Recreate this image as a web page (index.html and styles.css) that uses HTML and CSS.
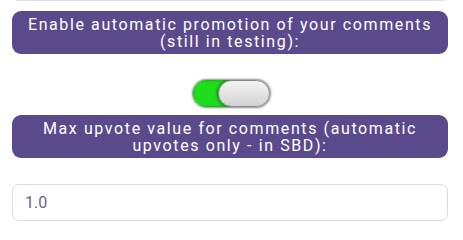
FILE: index.html
```html
<!DOCTYPE html>
<html>
<head>
<meta charset="utf-8">
<link rel="stylesheet" href="styles.css">
</head>
<body>
<div class="page">
  <div class="prev-line"></div>
  <div class="label label-first">Enable automatic promotion of your comments (still in testing):</div>
  <div class="toggle-row">
    <div class="toggle">
      <div class="toggle-on"></div>
      <div class="knob"></div>
    </div>
  </div>
  <div class="label">Max upvote value for comments (automatic upvotes only - in SBD):</div>
  <div class="field">1.0</div>
</div>
</body>
</html>
```

FILE: styles.css
```css
html, body {
  margin: 0;
  padding: 0;
  background: #ffffff;
}
.page {
  width: 463px;
  padding: 0 15px 0 12px;
  box-sizing: border-box;
  font-family: Roboto, "Noto Sans", sans-serif;
}
.prev-line {
  height: 1px;
  margin: 0 3px 0 4px;
  background: #dedede;
}
.label {
  background: #5b4a8b;
  color: #ffffff;
  border-radius: 9px;
  font-size: 16px;
  line-height: 17px;
  letter-spacing: 1.6px;
  text-align: center;
  padding: 5px 8px 4px;
}
.label-first {
  margin-top: 10px;
}
.toggle-row {
  display: flex;
  justify-content: center;
  padding: 26px 0 8px;
}
.toggle {
  position: relative;
  width: 77px;
  height: 27px;
  margin-left: 3px;
  border-radius: 14px;
  background: #dcdcdc;
  box-shadow: 0 0 2px 1px rgba(0,0,0,0.45);
  overflow: hidden;
}
.toggle-on {
  width: 40px;
  height: 100%;
  background: #1fdc1f;
  box-shadow: inset 0 0 3px rgba(0,0,0,0.4);
}
.knob {
  position: absolute;
  right: 0;
  top: 0;
  width: 52px;
  height: 27px;
  box-sizing: border-box;
  border-radius: 14px;
  border: 1px solid #8a8a8a;
  background: linear-gradient(#f4f4f4, #d2d2d2);
  box-shadow: -1px 0 3px rgba(0,0,0,0.5);
}
.field {
  margin-top: 26px;
  height: 37px;
  box-sizing: border-box;
  border: 1px solid #dcdcdc;
  border-radius: 7px;
  padding: 0 12px;
  display: flex;
  align-items: center;
  font-family: Roboto, "Noto Sans", sans-serif;
  font-size: 16px;
  color: #6b6388;
}
```
